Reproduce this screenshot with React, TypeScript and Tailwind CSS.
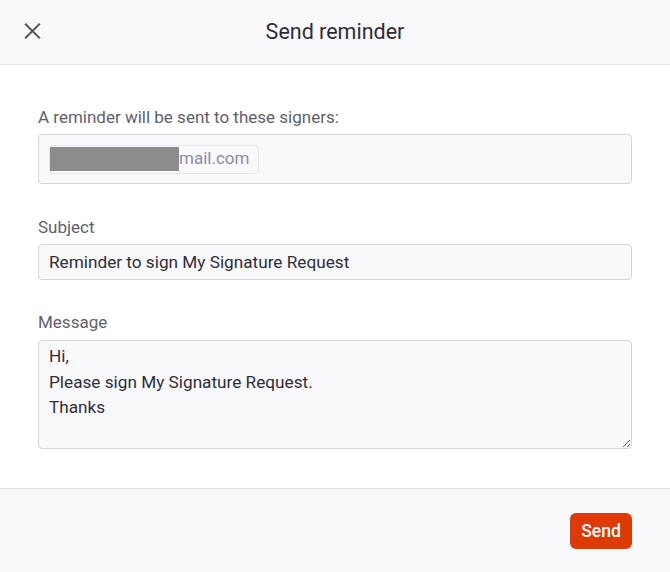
import React from "react";

const font = { fontFamily: "Roboto, 'Noto Sans', sans-serif" };

function CloseIcon() {
  return (
    <svg width="18" height="18" viewBox="0 0 18 18" fill="none">
      <path d="M2 2L16 16M16 2L2 16" stroke="#55555e" strokeWidth="2.2" strokeLinecap="square" />
    </svg>
  );
}

export default function App() {
  return (
    <div className="flex h-[572px] w-[670px] flex-col bg-white text-[#2e2e3a]" style={font}>
      <header className="relative flex h-[65px] shrink-0 items-center justify-center border-b border-[#e4e4ea] bg-[#f9f9fb]">
        <button className="absolute left-[24px] top-[22px] flex h-[17px] w-[17px] items-center justify-center">
          <CloseIcon />
        </button>
        <h1 className="text-[21.5px] font-normal text-[#2c2c38]">Send reminder</h1>
      </header>

      <main className="flex flex-1 flex-col px-[38px] pt-[42px]">
        <label className="mb-[7px] text-[17px] leading-[20px] text-[#5f5f6b]">
          A reminder will be sent to these signers:
        </label>
        <div className="flex h-[50px] items-center rounded-[4px] border border-[#d4d4da] bg-[#f9f9fb] px-[10px]">
          <div className="flex h-[29px] w-[210px] items-center rounded-[4px] border border-[#e6e6ec] bg-[#f9f9fb]">
            <span className="h-[24px] w-[129px] bg-[#8c8c8c]" />
            <span className="text-[17px] text-[#8f8ba5]">mail.com</span>
          </div>
        </div>

        <label className="mb-[7px] mt-[33px] text-[17px] leading-[20px] text-[#5f5f6b]">Subject</label>
        <input
          className="h-[36px] rounded-[4px] border border-[#d4d4da] bg-[#f9f9fb] px-[10px] text-[17.2px] text-[#2e2e3a] outline-none"
          defaultValue="Reminder to sign My Signature Request"
        />

        <label className="mb-[8px] mt-[32px] text-[17px] leading-[20px] text-[#5f5f6b]">Message</label>
        <textarea
          className="h-[109px] resize-y rounded-[4px] border border-[#d4d4da] bg-[#f9f9fb] px-[10px] pt-[3px] text-[17.2px] leading-[25.5px] text-[#2e2e3a] outline-none"
          defaultValue={"Hi,\nPlease sign My Signature Request.\nThanks"}
        />
      </main>

      <footer className="flex h-[84px] shrink-0 items-start justify-end border-t border-[#e0e0e6] bg-[#f9f9fb] px-[38px] pt-[24px]">
        <button className="h-[36px] w-[62px] rounded-[6px] bg-[#dc3a06] text-[17.5px] font-medium text-white">
          Send
        </button>
      </footer>
    </div>
  );
}
